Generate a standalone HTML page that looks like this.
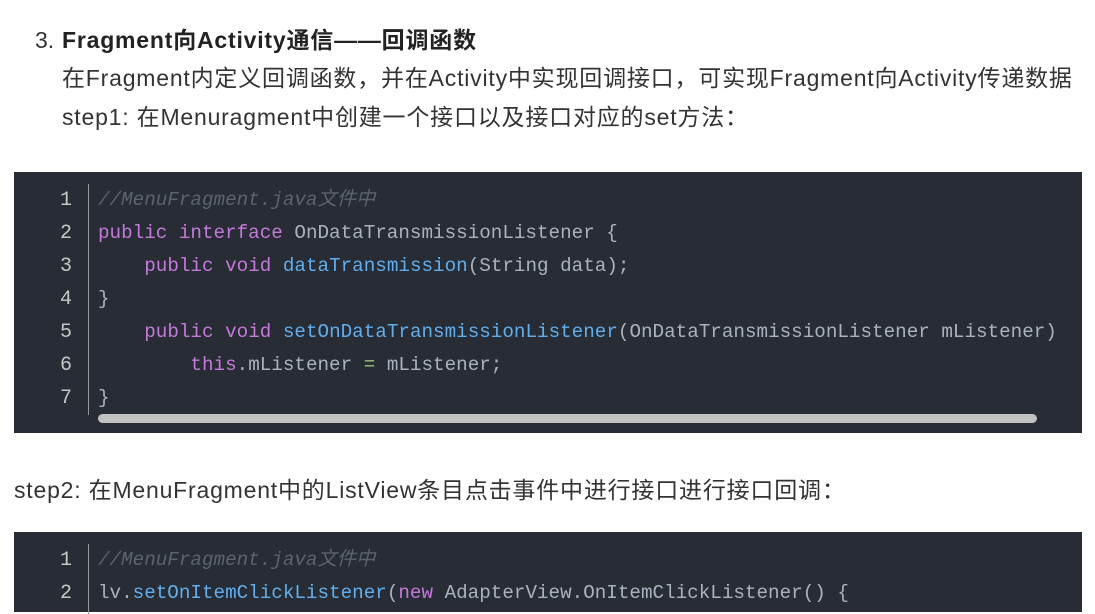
<!DOCTYPE html>
<html><head><meta charset="utf-8"><style>
body{margin:0;background:#fff;width:1095px;height:597px;overflow:hidden;font-family:"Liberation Sans","Noto Sans CJK SC",sans-serif;color:#333;}
.t{position:absolute;font-size:23px;letter-spacing:0.8px;white-space:nowrap;line-height:30px}
.code{position:absolute;left:14px;width:1068px;background:#282c34;}
.ln{position:absolute;left:0;width:58px;text-align:right;color:#c5c8c6;font-family:"Liberation Mono",monospace;font-size:20px;}
.bar{position:absolute;left:74px;width:1px;background:#999;}
pre{position:absolute;left:84px;margin:0;font-family:"Liberation Mono","Noto Sans CJK SC",monospace;font-size:19.25px;line-height:33px;color:#abb2bf;}
.c{color:#5c6370;font-style:italic}.k{color:#c678dd}.f{color:#61aeee}.o{color:#98c379}
</style></head><body>
<div class="t" style="left:35px;top:25px;letter-spacing:0">3.</div>
<div class="t" style="left:62px;top:25px;font-weight:bold;color:#222">Fragment向Activity通信——回调函数</div>
<div class="t" style="left:62px;top:63px">在Fragment内定义回调函数，并在Activity中实现回调接口，可实现Fragment向Activity传递数据</div>
<div class="t" style="left:62px;top:102px">step1: 在Menuragment中创建一个接口以及接口对应的set方法：</div>
<div class="code" style="top:172px;height:261px">
<div class="ln" style="top:12px;line-height:33px">1<br>2<br>3<br>4<br>5<br>6<br>7</div>
<div class="bar" style="top:12px;height:231px"></div>
<pre style="top:12px"><span class="c">//MenuFragment.java文件中</span>
<span class="k">public</span> <span class="k">interface</span> OnDataTransmissionListener {
    <span class="k">public</span> <span class="k">void</span> <span class="f">dataTransmission</span>(String data);
}
    <span class="k">public</span> <span class="k">void</span> <span class="f">setOnDataTransmissionListener</span>(OnDataTransmissionListener mListener)
        <span class="k">this</span>.mListener <span class="o">=</span> mListener;
}</pre>
<div style="position:absolute;left:84px;top:242px;width:939px;height:9px;border-radius:5px;background:#c1c1c1"></div>
</div>
<div class="t" style="left:14px;top:475px">step2: 在MenuFragment中的ListView条目点击事件中进行接口进行接口回调：</div>
<div class="code" style="top:532px;height:80px">
<div class="ln" style="top:12px;line-height:33px">1<br>2</div>
<div class="bar" style="top:12px;height:70px"></div>
<pre style="top:12px"><span class="c">//MenuFragment.java文件中</span>
lv.<span class="f">setOnItemClickListener</span>(<span class="k">new</span> AdapterView.OnItemClickListener() {</pre>
</div>
</body></html>
